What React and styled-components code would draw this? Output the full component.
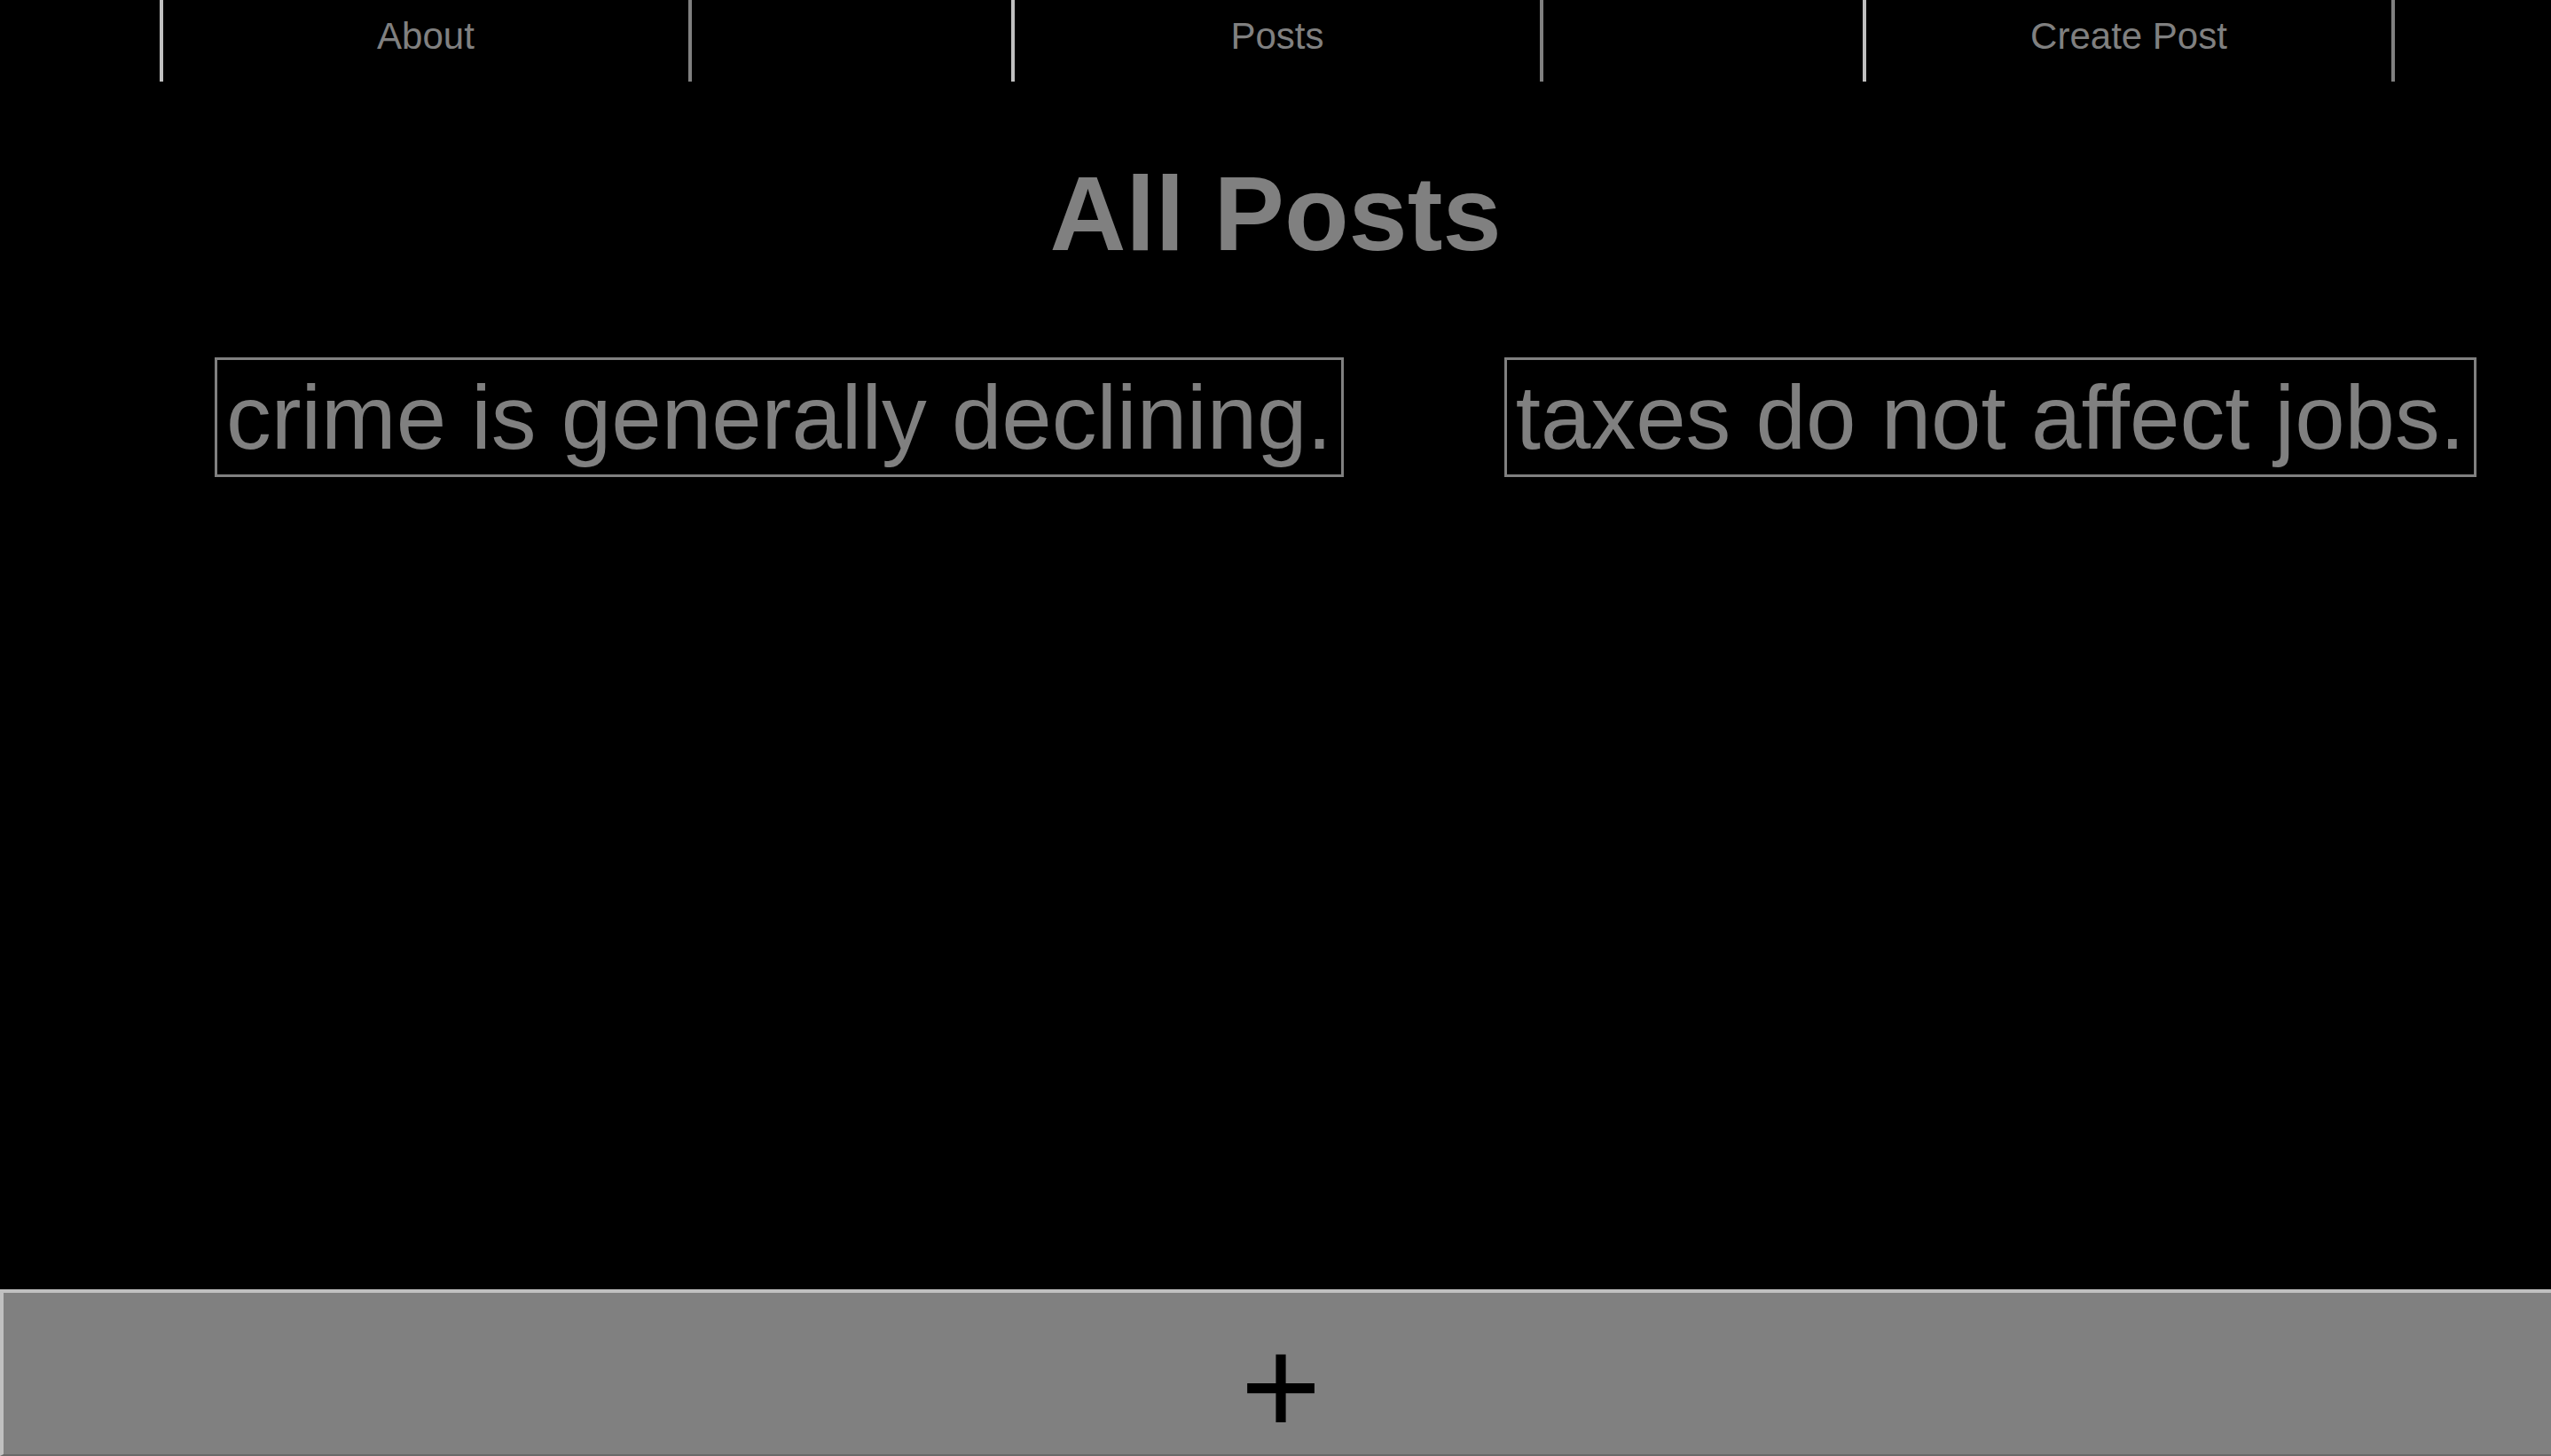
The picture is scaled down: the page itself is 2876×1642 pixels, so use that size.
import React from "react";
import styled, { createGlobalStyle } from "styled-components";

const GlobalStyle = createGlobalStyle`
  html, body {
    margin: 0;
    padding: 0;
    background: #000;
  }
  body {
    font-family: "Liberation Sans", Arial, Helvetica, sans-serif;
  }
  * { box-sizing: border-box; }
`;

const Page = styled.div`
  display: flex;
  flex-direction: column;
  height: 100vh;
  overflow: hidden;
  background: #000;
`;

const Nav = styled.nav`
  display: flex;
  gap: 360px;
  padding-left: 180px;
  height: 92px;
  flex: none;
`;

const NavLink = styled.a`
  flex: none;
  width: 600px;
  height: 92px;
  padding-top: 17px;
  border-left: 4px solid #c0c0c0;
  border-right: 4px solid #808080;
  color: #808080;
  font-size: 42px;
  line-height: 48px;
  text-align: center;
  text-decoration: none;
  cursor: pointer;
`;

const Main = styled.main`
  flex: 1;
  display: flex;
  flex-direction: column;
`;

const Title = styled.h1`
  margin: 80px 0 0;
  color: #808080;
  font-size: 119px;
  font-weight: 700;
  line-height: 137px;
  text-align: center;
`;

const PostRow = styled.div`
  display: flex;
  justify-content: center;
  align-items: flex-start;
  gap: 181px;
  padding-left: 158px;
  margin-top: 94px;
`;

const PostCard = styled.a`
  display: block;
  flex: none;
  border: 3px solid #808080;
  padding: 9px 10px 7px;
  color: #808080;
  font-size: 101.5px;
  line-height: 113px;
  white-space: nowrap;
  text-decoration: none;
  cursor: pointer;
`;

const AddButton = styled.button`
  flex: none;
  width: calc(100% + 8px);
  height: 188px;
  margin: 0;
  padding: 30px 0 0;
  background: #808080;
  border-top: 4px solid #c0c0c0;
  border-left: 4px solid #c0c0c0;
  border-right: none;
  border-bottom: 2px solid #6a6a6a;
  color: #000;
  font-family: "Liberation Sans", Arial, Helvetica, sans-serif;
  font-size: 156px;
  line-height: 150px;
  text-align: center;
  display: block;
  cursor: pointer;
`;

const navItems = ["About", "Posts", "Create Post"];
const posts = ["crime is generally declining.", "taxes do not affect jobs."];

export default function App() {
  return (
    <>
      <GlobalStyle />
      <Page>
        <Nav>
          {navItems.map((item) => (
            <NavLink key={item}>{item}</NavLink>
          ))}
        </Nav>
        <Main>
          <Title>All Posts</Title>
          <PostRow>
            {posts.map((p) => (
              <PostCard key={p}>{p}</PostCard>
            ))}
          </PostRow>
        </Main>
        <AddButton>+</AddButton>
      </Page>
    </>
  );
}
